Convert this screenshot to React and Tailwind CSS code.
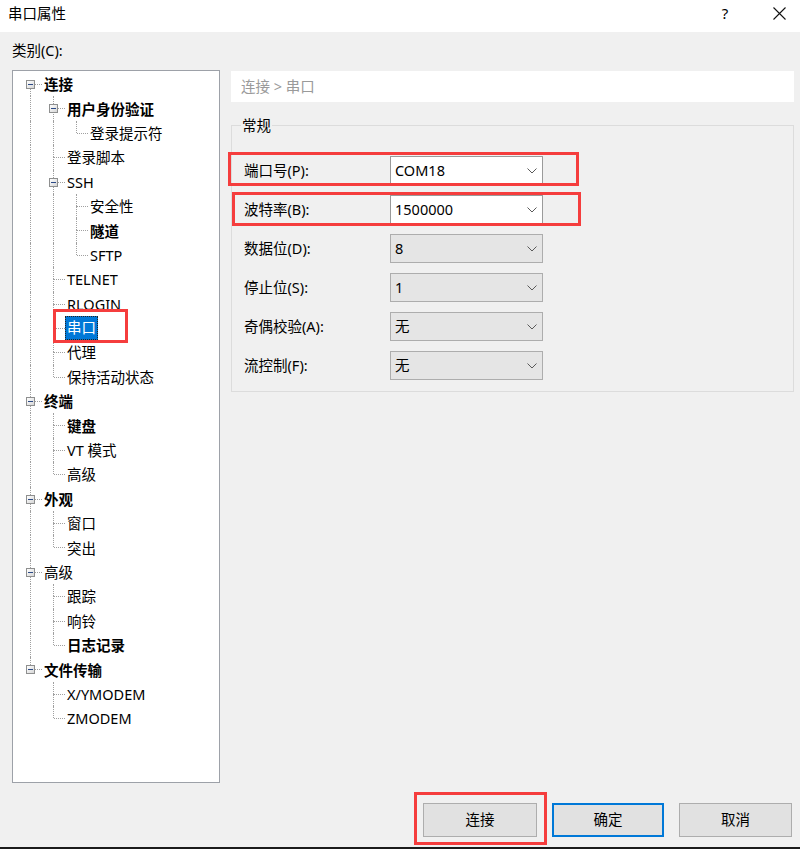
import React from "react";

const tree = [
  {
    t: "连接", b: 1, c: [
      { t: "用户身份验证", b: 1, c: [{ t: "登录提示符" }] },
      { t: "登录脚本" },
      { t: "SSH", c: [{ t: "安全性" }, { t: "隧道", b: 1 }, { t: "SFTP" }] },
      { t: "TELNET" },
      { t: "RLOGIN" },
      { t: "串口", sel: 1 },
      { t: "代理" },
      { t: "保持活动状态" },
    ],
  },
  { t: "终端", b: 1, c: [{ t: "键盘", b: 1 }, { t: "VT 模式" }, { t: "高级" }] },
  { t: "外观", b: 1, c: [{ t: "窗口" }, { t: "突出" }] },
  { t: "高级", c: [{ t: "跟踪" }, { t: "响铃" }, { t: "日志记录", b: 1 }] },
  { t: "文件传输", b: 1, c: [{ t: "X/YMODEM" }, { t: "ZMODEM" }] },
];

function flatten(nodes, level, anc, out) {
  nodes.forEach((n, i) => {
    const hasNext = i < nodes.length - 1;
    out.push({
      ...n,
      level,
      anc,
      hasNext,
      first: level === 0 && i === 0,
      hasKids: !!n.c,
    });
    if (n.c) flatten(n.c, level + 1, [...anc, hasNext], out);
  });
  return out;
}

const rows = flatten(tree, 0, [], []);

function TreeRow({ r }) {
  return (
    <div className="relative flex h-[24.4px] items-center">
      {r.anc.map((a, c) => (
        <span key={c} className="relative h-full w-[23px] shrink-0">
          {a && (
            <span className="absolute left-[11px] top-0 bottom-0 border-l border-dotted border-[#a0a0a0]" />
          )}
        </span>
      ))}
      <span className="relative h-full w-[23px] shrink-0">
        {!r.first && (
          <span className="absolute left-[11px] top-0 h-[12px] border-l border-dotted border-[#a0a0a0]" />
        )}
        {r.hasNext && (
          <span className="absolute left-[11px] top-[12px] bottom-0 border-l border-dotted border-[#a0a0a0]" />
        )}
        <span className="absolute left-[12px] right-0 top-[12px] border-t border-dotted border-[#a0a0a0]" />
        {r.hasKids && (
          <span className="absolute left-[7px] top-[8px] flex h-[9px] w-[9px] items-center justify-center border border-[#8e8f8f] bg-linear-to-br from-white to-[#d6d6d6]">
            <span className="h-px w-[5px] bg-[#2c4a86]" />
          </span>
        )}
      </span>
      {r.sel ? (
        <span className="flex h-[24px] items-center border border-dotted border-[#222] bg-[#0078d7] px-[1px] text-white">
          {r.t}
        </span>
      ) : (
        <span className={`px-[2px] leading-[22px] text-black ${r.b ? "font-bold" : ""}`}>{r.t}</span>
      )}
      {r.sel && (
        <span className="pointer-events-none absolute left-[34px] top-[-7px] z-10 h-[34px] w-[75px] border-[3px] border-[#f53d3d]" />
      )}
    </div>
  );
}

function Chevron() {
  return (
    <svg width="10" height="6" viewBox="0 0 10 6" className="shrink-0">
      <polyline points="0.5,0.5 5,5 9.5,0.5" fill="none" stroke="#5a5a5a" strokeWidth="1" />
    </svg>
  );
}

const fields = [
  { l: "端口号(P):", v: "COM18", w: true, red: "a" },
  { l: "波特率(B):", v: "1500000", w: true, red: "b" },
  { l: "数据位(D):", v: "8" },
  { l: "停止位(S):", v: "1" },
  { l: "奇偶校验(A):", v: "无" },
  { l: "流控制(F):", v: "无" },
];

export default function App() {
  return (
    <div className="flex h-[849px] w-[800px] flex-col overflow-hidden bg-[#f0f0f0] font-['Noto_Sans','Noto_Sans_CJK_SC',sans-serif] text-[14.5px] text-black">
      {/* title bar */}
      <div className="flex h-[32px] shrink-0 items-start bg-white pt-[3px]">
        <span className="ml-[8px] leading-[20px]">串口属性</span>
        <div className="ml-auto mr-[14px] flex items-start gap-[38px]">
          <span className="w-[20px] text-center text-[15px] leading-[20px]">?</span>
          <svg width="13" height="13" viewBox="0 0 13 13" className="mt-[4px]">
            <path d="M0.5 0.5 L12.5 12.5 M12.5 0.5 L0.5 12.5" stroke="#111" strokeWidth="1.1" />
          </svg>
        </div>
      </div>

      {/* body */}
      <div className="flex shrink-0 gap-[11px] pl-[12px] pr-[6px]">
        <div className="flex w-[208px] shrink-0 flex-col">
          <div className="flex h-[38px] items-center">类别(C):</div>
          <div className="h-[713px] border border-[#9da1a8] bg-white pl-[6px] pt-[1px]">
            {rows.map((r, i) => (
              <TreeRow key={i} r={r} />
            ))}
          </div>
        </div>

        <div className="flex flex-1 flex-col pt-[39px]">
          <div className="flex h-[31px] items-center bg-white pl-[10px] text-[#9a9a9a]">连接 &gt; 串口</div>
          <fieldset className="mt-[13px] border border-[#dcdcdc] p-0">
            <legend className="ml-[9px] px-[1px] leading-[20px]">常规</legend>
            <div className="flex flex-col gap-[10px] pb-[11px] pl-[12px] pt-[21px]">
              {fields.map((f) => (
                <div key={f.l} className="relative flex h-[29px] items-center">
                  <span className="w-[146px] shrink-0">{f.l}</span>
                  <div
                    className={`flex h-full w-[153px] items-center justify-between border pl-[4px] pr-[5px] ${
                      f.w ? "border-[#9a9a9a] bg-white" : "border-[#adadad] bg-[#e5e5e5]"
                    }`}
                  >
                    <span>{f.v}</span>
                    <Chevron />
                  </div>
                  {f.red === "a" && (
                    <span className="pointer-events-none absolute left-[-16px] top-[-4px] h-[34px] w-[351px] border-[3px] border-[#f53d3d]" />
                  )}
                  {f.red === "b" && (
                    <span className="pointer-events-none absolute left-[-12px] top-[-3px] h-[34px] w-[349px] border-[3px] border-[#f53d3d]" />
                  )}
                </div>
              ))}
            </div>
          </fieldset>
        </div>
      </div>

      {/* buttons */}
      <div className="mt-[20px] flex shrink-0 justify-end gap-[15px] pr-[8px]">
        <div className="relative">
          <button className="h-[34px] w-[114px] border border-[#adadad] bg-[#e1e1e1]">连接</button>
          <span className="pointer-events-none absolute left-[-9px] top-[-11px] h-[53px] w-[133px] border-[3px] border-[#f53d3d]" />
        </div>
        <button className="h-[34px] w-[112px] border-2 border-[#0078d7] bg-[#e1e1e1]">确定</button>
        <button className="h-[34px] w-[113px] border border-[#adadad] bg-[#e1e1e1]">取消</button>
      </div>

      <div className="mt-auto h-[2px] shrink-0 bg-[#1b1b1b]" />
    </div>
  );
}
